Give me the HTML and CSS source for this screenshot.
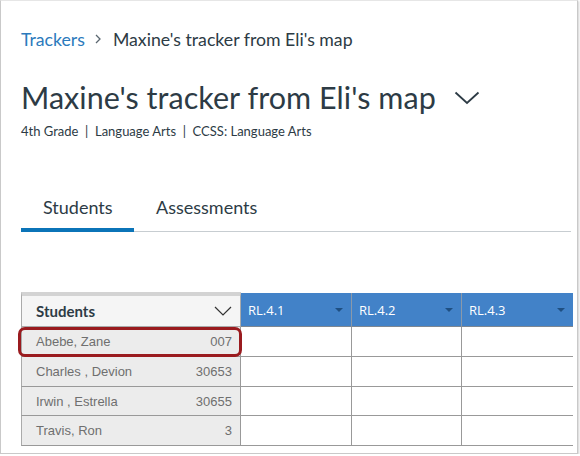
FILE: index.html
```html
<!DOCTYPE html>
<html>
<head>
<meta charset="utf-8">
<link rel="stylesheet" href="styles.css">
</head>
<body>
<div class="frame">
  <div class="content">
    <nav class="crumbs">
      <span class="crumb-link">Trackers</span>
      <svg class="crumb-sep" width="10" height="12" viewBox="0 0 10 12"><path d="M3 2 L7 6 L3 10" fill="none" stroke="#5b6770" stroke-width="1.3"/></svg>
      <span class="crumb-cur">Maxine's tracker from Eli's map</span>
    </nav>
    <div class="title-row">
      <h1 class="title">Maxine's tracker from Eli's map</h1>
      <svg class="title-chev" width="26" height="14" viewBox="0 0 26 14"><path d="M1.5 1.5 L13 12 L24.5 1.5" fill="none" stroke="#2d3b45" stroke-width="1.8"/></svg>
    </div>
    <div class="meta">4th Grade &nbsp;|&nbsp; Language Arts &nbsp;|&nbsp; CCSS: Language Arts</div>
    <div class="tabs">
      <div class="tab active">Students</div>
      <div class="tab">Assessments</div>
    </div>
    <div class="grid-wrap">
      <div class="grid">
        <div class="cell head-students">
          <span>Students</span>
          <svg width="18" height="10" viewBox="0 0 18 10"><path d="M1 1 L9 9 L17 1" fill="none" stroke="#333" stroke-width="1.2"/></svg>
        </div>
        <div class="cell head-std"><span>RL.4.1</span><i class="tri"></i></div>
        <div class="cell head-std"><span>RL.4.2</span><i class="tri"></i></div>
        <div class="cell head-std last"><span>RL.4.3</span><i class="tri"></i></div>

        <div class="cell stu"><span>Abebe, Zane</span><span>007</span></div>
        <div class="cell val"></div><div class="cell val"></div><div class="cell val last"></div>

        <div class="cell stu"><span>Charles , Devion</span><span>30653</span></div>
        <div class="cell val"></div><div class="cell val"></div><div class="cell val last"></div>

        <div class="cell stu"><span>Irwin , Estrella</span><span>30655</span></div>
        <div class="cell val"></div><div class="cell val"></div><div class="cell val last"></div>

        <div class="cell stu"><span>Travis, Ron</span><span>3</span></div>
        <div class="cell val"></div><div class="cell val"></div><div class="cell val last"></div>
      </div>
      <div class="highlight"></div>
    </div>
  </div>
</div>
</body>
</html>
```

FILE: styles.css
```css
* { box-sizing: border-box; }
html, body { margin: 0; padding: 0; background: #fff; }
body { font-family: Lato, "Liberation Sans", sans-serif; color: #2d3b45; }

.frame {
  width: 578px;
  height: 454px;
  border: 1px solid #c9c9c9;
  border-top-color: #e6e6e6;
  box-shadow: 1px 1px 2px rgba(0,0,0,0.18);
  overflow: hidden;
  background: #fff;
}
.content { padding: 0 4px 0 20px; }

.crumbs {
  margin-top: 26px;
  height: 24px;
  display: flex;
  align-items: center;
  font-size: 17.7px;
}
.crumb-link { color: #2b7abc; }
.crumb-sep { margin: 0 10px 0 8px; }
.crumb-cur { color: #2d3b45; }

.title-row {
  margin-top: 28px;
  display: flex;
  align-items: center;
  height: 36px;
}
.title {
  margin: 0;
  font-size: 30.5px;
  font-weight: 400;
  line-height: 36px;
  letter-spacing: 0.05px;
}
.title-chev { margin-left: 18px; margin-top: 2px; }

.meta {
  margin-top: 7px;
  font-size: 13px;
  line-height: 18px;
  color: #2d3b45;
}

.tabs {
  margin-top: 48px;
  display: flex;
  border-bottom: 1px solid #c7cdd1;
  height: 44px;
  margin-right: 2px;
}
.tab {
  font-size: 18px;
  line-height: 38px;
  height: 44px;
  padding-left: 22px;
  color: #2d3b45;
}
.tab.active {
  width: 113px;
  padding-left: 22px;
  border-bottom: 4px solid #0b74b8;
}

.grid-wrap {
  position: relative;
  margin-top: 60px;
  width: 552px;
}
.grid {
  display: grid;
  grid-template-columns: 220px 111px 110px 111px;
  grid-template-rows: 35px 30px 30px 29px 30px;
}
.cell {
  border-right: 1px solid #999;
  border-bottom: 1px solid #999;
}
.cell.last { border-right: none; }

.head-students {
  background: #f5f5f5;
  border-top: 4px solid #d3d3d3;
  border-left: 1px solid #aaa;
  border-right: 1px solid #aaa;
  border-bottom: 1px solid #aaa;
  display: flex;
  align-items: center;
  justify-content: space-between;
  padding: 0 8px 0 14px;
  font-weight: 700;
  font-size: 15px;
  color: #2d3b45;
}
.head-students svg { margin-top: -1px; }

.head-std {
  margin-top: 1px;
  background: #4282c8;
  border-right: 1px solid #8a99aa;
  border-bottom: 1px solid #7d8792;
  display: flex;
  align-items: center;
  justify-content: space-between;
  padding: 0 8px 0 7px;
  color: #fff;
  font-family: "Open Sans", "Noto Sans", sans-serif;
  font-size: 13px;
}
.tri {
  width: 0; height: 0;
  border-left: 4px solid transparent;
  border-right: 4px solid transparent;
  border-top: 4px solid #1e4f82;
}

.stu {
  background: #ececec;
  border-left: 1px solid #aaa;
  display: flex;
  align-items: center;
  justify-content: space-between;
  padding: 0 8px 0 14px;
  font-family: "Liberation Sans", Arial, sans-serif;
  font-size: 13px;
  color: #6f6f6f;
}
.val { background: #fff; }

.highlight {
  position: absolute;
  left: -3px;
  top: 35px;
  width: 224px;
  height: 30px;
  border: 3px solid #9a1b1f;
  border-radius: 7px;
}
```
